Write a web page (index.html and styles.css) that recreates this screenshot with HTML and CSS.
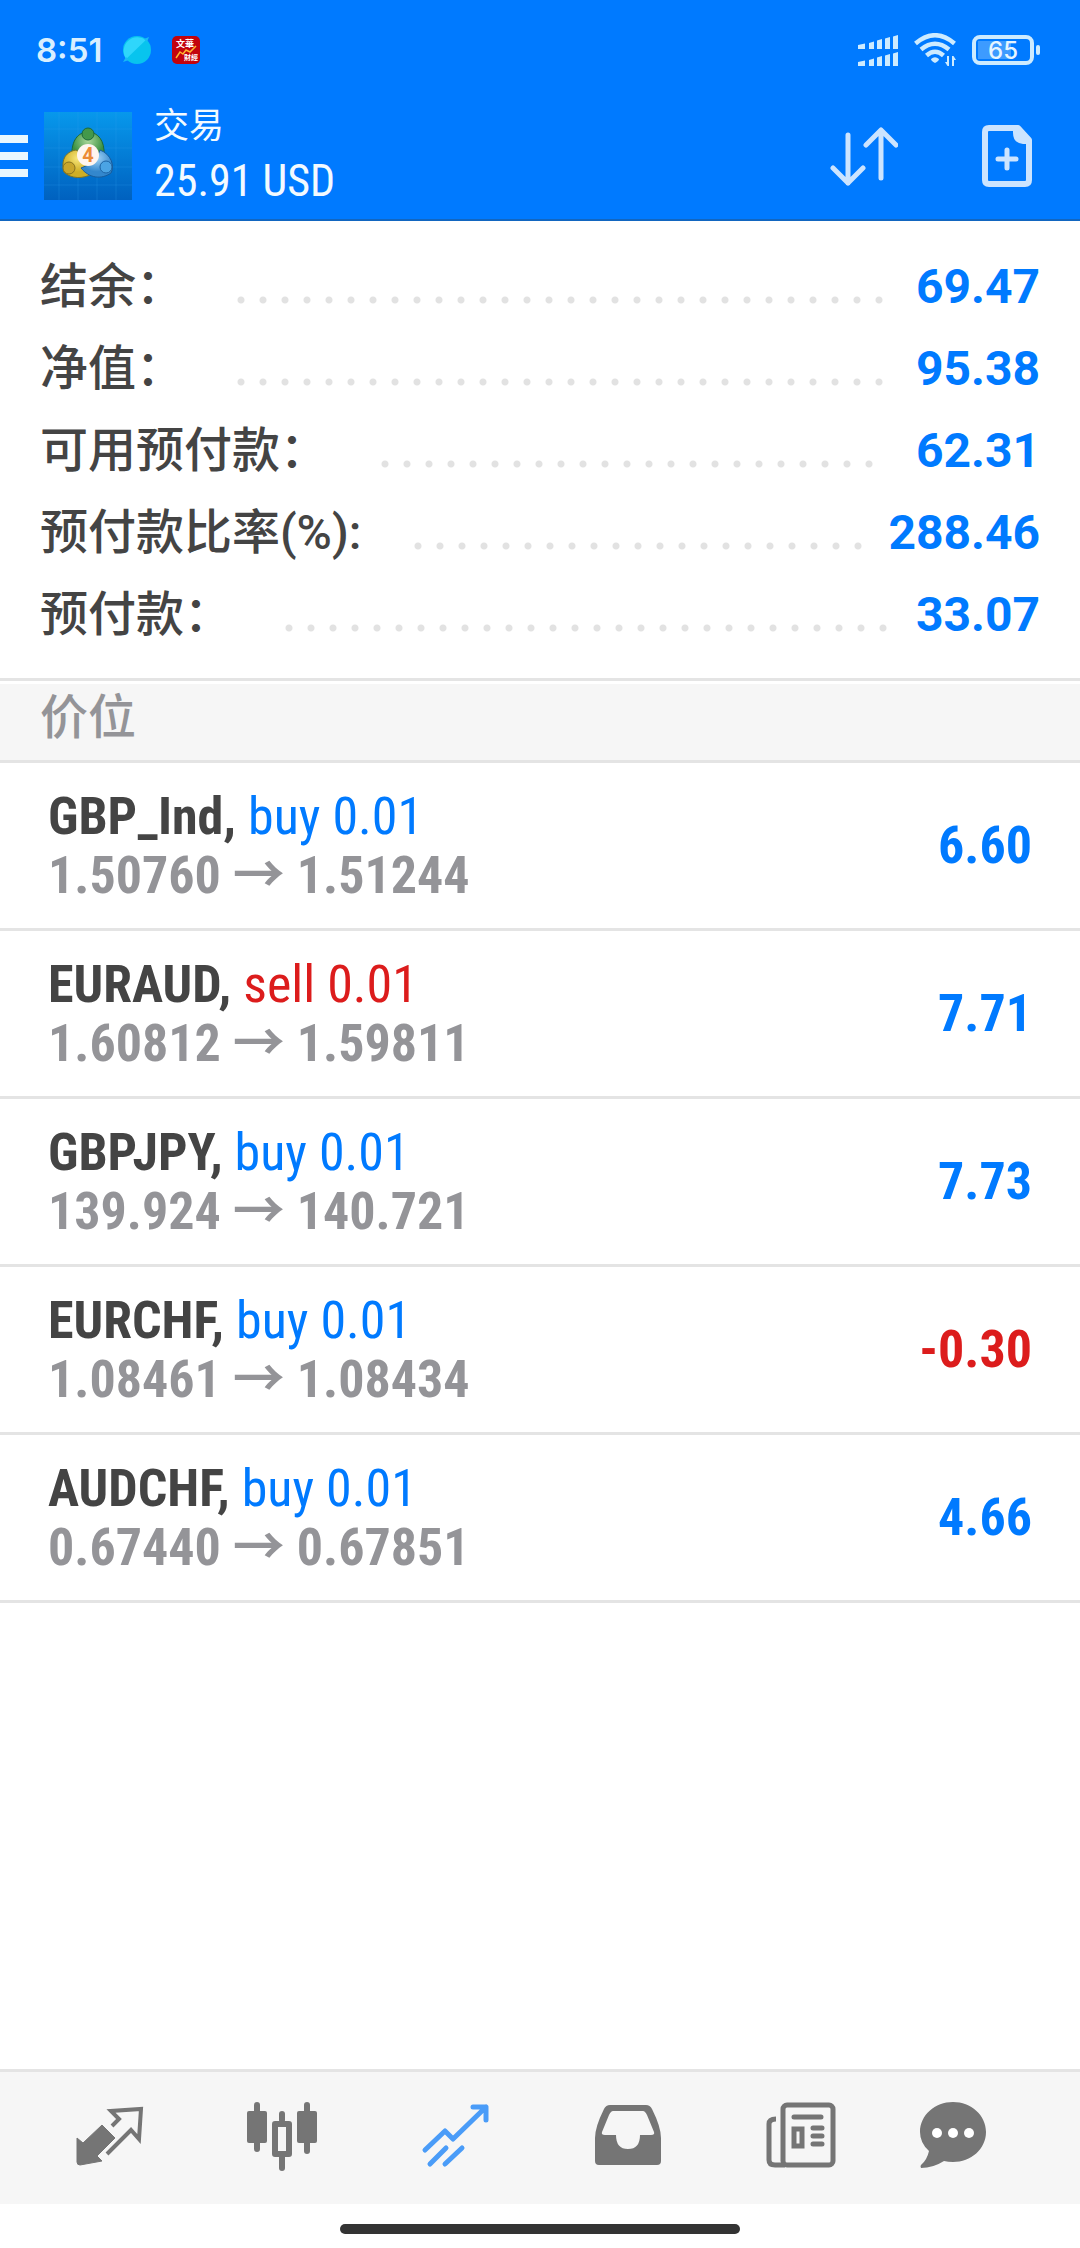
FILE: index.html
```html
<!DOCTYPE html>
<html lang="zh-CN">
<head>
<meta charset="utf-8">
<meta name="viewport" content="width=device-width, initial-scale=1">
<title>交易</title>
<link rel="stylesheet" href="styles.css">
</head>
<body>
<div class="screen">
  <header class="top">
    <div class="status">
      <span class="clock">8:51</span>
      <svg class="badge" viewBox="0 0 28 28" aria-hidden="true"><circle cx="14" cy="14" r="14" fill="#08c4ee"/><path d="M0 26L26 1L23 4A14 14 0 0 0 3 23Z" fill="#2fd6fb"/><path d="M0 26l6-2-3-3zM26 1l-5 2 3 3z" fill="#18b9f5"/></svg>
      <svg class="badge" viewBox="0 0 28 28" aria-hidden="true"><rect width="28" height="28" rx="5" fill="#c3030d"/><text class="badge-text" x="4" y="11">文華</text><text class="badge-text badge-small" x="12" y="24">財經</text><path d="M4 22l4-6 3 2 3-4 4 2 6-6" fill="none" stroke="#ffb52e" stroke-width="1.500"/></svg>
      <span class="spacer"></span>
      <svg class="signal" viewBox="0 0 40 31" aria-hidden="true"><path fill="#cdebff" d="M0 10l7-1.500v5.500H0zM11 8l5-1.500V14h-5zM19 5.500l5-1.500v10h-5zM27 3.500L32 2v12h-5zM35 1.500L40 0v14h-5zM0 27l7-1.500V31H0zM11 25l5-1.500V31h-5zM19 22.500l5-1.500v10h-5zM27 20.500l5-1.500v12h-5zM35 18.500l5-1.500v14h-5z"/></svg>
      <svg class="wifi" viewBox="0 0 42 34" aria-hidden="true"><g fill="none" stroke="#cdebff" stroke-width="4.500"><path d="M1.500 10.500Q21-6 40.500 10.500M7 16.500Q21 5 35 16.500M12.500 22.500Q21 15 29.500 22.500"/></g><path fill="#cdebff" d="M17 26q4-3.500 8 0 0 2-4 4-4-2-4-4zM35 23v10h-1.500L31 29h2v-6zM38 33V23h1.500l2.500 4h-2v6z"/></svg>
      <svg class="battery" viewBox="0 0 68 30" aria-hidden="true"><rect x="6" y="6" width="33" height="18" fill="#3d9bff"/><rect x="2" y="2" width="58" height="26" rx="6" fill="none" stroke="#cdebff" stroke-width="4"/><rect x="64" y="10" width="4" height="10" rx="2" fill="#cdebff"/><text class="battery-text" x="31" y="24" text-anchor="middle">65</text></svg>
    </div>
    <div class="appbar">
      <button class="menu" aria-label="菜单"><svg viewBox="0 0 28 42"><path d="M0 4h28M0 21h28M0 38h28" stroke="#e9f7ff" stroke-width="8"/></svg></button>
      <svg class="logo" viewBox="0 0 88 88" aria-hidden="true">
        <defs>
          <linearGradient id="sky" x2="0" y2="1"><stop stop-color="#0798ec"/><stop offset="1" stop-color="#0061bf"/></linearGradient>
          <radialGradient id="leaf" cy=".3"><stop stop-color="#a9d79a"/><stop offset="1" stop-color="#3a9142"/></radialGradient>
          <radialGradient id="gold" cy=".3"><stop stop-color="#f7e67a"/><stop offset="1" stop-color="#cfae25"/></radialGradient>
          <radialGradient id="blue" cy=".3"><stop stop-color="#a2d4f7"/><stop offset="1" stop-color="#3387cd"/></radialGradient>
        </defs>
        <rect width="88" height="88" fill="url(#sky)"/>
        <path d="M0 17h88M0 36h88M0 55h88M0 73h88M15 0v88M34 0v88M53 0v88M72 0v88" stroke="#2fa3ee" stroke-opacity=".25"/>
        <path d="M28 44C27 29 34 20 44 20S61 29 60 43L48 50Z" fill="url(#leaf)" stroke="#1d6938"/>
        <path d="M32 38C20 40 17 50 20 60c7 7 19 7 28 2L40 43Z" fill="url(#gold)" stroke="#7c7427"/>
        <path d="M56 38C67 42 71 54 67 61 57 68 45 66 37 56l14-6Z" fill="url(#blue)" stroke="#185c9b"/>
        <circle cx="44" cy="22" r="6" fill="#43984a" stroke="#1d6938"/><circle cx="25" cy="56" r="6" fill="#c9a62c" stroke="#867222"/><circle cx="62" cy="55" r="6" fill="#4ba4e4" stroke="#1d64a5"/>
        <circle cx="44" cy="43" r="11" fill="#fff5ef"/>
        <text class="logo-text" x="44" y="50" text-anchor="middle">4</text>
      </svg>
      <div class="titles">
        <h1 class="title">交易</h1>
        <div class="equity">25.91 USD</div>
      </div>
      <button class="action" aria-label="排序"><svg class="sort" viewBox="0 0 68 60"><path d="M18 9v48M3 42l15 15 15-15M51 52V4M36 19L51 4l15 15" fill="none" stroke="#cce4ff" stroke-width="5" stroke-linecap="round" stroke-linejoin="round"/></svg></button>
      <button class="action" aria-label="新订单"><svg class="order" viewBox="0 0 50 62"><path d="M7 3h29l11 12v40q0 4-4 4H7q-4 0-4-4V7q0-4 4-4z" fill="none" stroke="#cce4ff" stroke-width="6" stroke-linejoin="round"/><path d="M31 3h7l10 11v5h-7Q31 18 31 8z" fill="#cce4ff"/><path d="M16 34h18M25 25v18" stroke="#cce4ff" stroke-width="5" stroke-linecap="round"/></svg></button>
    </div>
  </header>

  <main class="content">
    <dl class="summary">
      <div class="line"><dt>结余：</dt><dd class="leader"></dd><dd class="amount">69.47</dd></div>
      <div class="line"><dt>净值：</dt><dd class="leader"></dd><dd class="amount">95.38</dd></div>
      <div class="line"><dt>可用预付款：</dt><dd class="leader"></dd><dd class="amount">62.31</dd></div>
      <div class="line"><dt>预付款比率(%):</dt><dd class="leader"></dd><dd class="amount">288.46</dd></div>
      <div class="line"><dt>预付款：</dt><dd class="leader"></dd><dd class="amount">33.07</dd></div>
    </dl>
    <h2 class="section">价位</h2>
    <ul class="positions">
      <li class="position"><div><div class="deal"><b>GBP_Ind,</b> <span class="buy">buy 0.01</span></div><div class="prices">1.50760 → 1.51244</div></div><div class="profit">6.60</div></li>
      <li class="position"><div><div class="deal"><b>EURAUD,</b> <span class="sell">sell 0.01</span></div><div class="prices">1.60812 → 1.59811</div></div><div class="profit">7.71</div></li>
      <li class="position"><div><div class="deal"><b>GBPJPY,</b> <span class="buy">buy 0.01</span></div><div class="prices">139.924 → 140.721</div></div><div class="profit">7.73</div></li>
      <li class="position"><div><div class="deal"><b>EURCHF,</b> <span class="buy">buy 0.01</span></div><div class="prices">1.08461 → 1.08434</div></div><div class="profit loss">-0.30</div></li>
      <li class="position"><div><div class="deal"><b>AUDCHF,</b> <span class="buy">buy 0.01</span></div><div class="prices">0.67440 → 0.67851</div></div><div class="profit">4.66</div></li>
    </ul>
  </main>

  <nav class="tabs">
    <button class="tab" aria-label="行情"><svg viewBox="0 0 72 72"><path d="M29 25L42 38 24 56l5 5-22 4q-3 0-3-3V38l6 5z" fill="#757575" stroke="#757575" stroke-linejoin="round"/><path d="M39 26l7-7-8-8 30-2-2 30-8-9-24 24" fill="none" stroke="#757575" stroke-width="4"/></svg></button>
    <button class="tab" aria-label="图表"><svg viewBox="0 0 72 72"><g fill="#757575"><rect x="1" y="11" width="20" height="32" rx="2"/><rect x="8" y="2" width="6" height="50" rx="3"/><rect x="51" y="11" width="20" height="32" rx="2"/><rect x="58" y="2" width="6" height="52" rx="3"/><rect x="33" y="11" width="6" height="12" rx="3"/><rect x="33" y="54" width="6" height="17" rx="3"/></g><rect x="29" y="24" width="14" height="30" fill="none" stroke="#757575" stroke-width="6" stroke-linejoin="round"/></svg></button>
    <button class="tab" aria-label="交易" aria-current="page"><svg viewBox="0 0 72 72"><path d="M6 50l20-19 8 8L67 7M54 7h13v13M11 64l16-16M26 64l17-16" fill="none" stroke="#4a9cf8" stroke-width="5" stroke-linecap="round" stroke-linejoin="round"/></svg></button>
    <button class="tab" aria-label="历史"><svg viewBox="0 0 72 72"><path fill="#757575" fill-rule="evenodd" d="M18 5h36q4 0 6 4 9 18 9 29v23q0 4-4 4H7q-4 0-4-4V38Q3 27 12 9q2-4 6-4zm3 6q-2 0-4 4l-7 17q-1 3 3 3h11q0 14 12 14t12-14h11q4 0 3-3l-7-17q-2-4-4-4z"/></svg></button>
    <button class="tab" aria-label="新闻"><svg viewBox="0 0 72 72"><g fill="none" stroke="#757575" stroke-width="5"><rect x="18" y="5" width="50" height="60" rx="4"/><path d="M11 19q-7 0-7 5v36q0 5 6 5h10"/><rect x="29" y="29" width="8" height="17"/><path d="M29 17h27M48 28h9M48 36h9M48 44h9" stroke-linecap="round"/></g></svg></button>
    <button class="tab" aria-label="消息"><svg viewBox="0 0 72 72"><path fill="#757575" d="M36 2C54 2 69 15 69 32S54 62 36 62q-5 0-9-1-11 7-23 7-1-2 0-3 6-5 8-14Q3 43 3 32C3 15 18 2 36 2z"/><g fill="#fff"><circle cx="20" cy="33" r="5"/><circle cx="36" cy="33" r="5"/><circle cx="52" cy="33" r="5"/></g></svg></button>
  </nav>
  <div class="home"><span class="pill"></span></div>
</div>
</body>
</html>
```
FILE: styles.css
```css
* { box-sizing: border-box; }
body, h1, h2, dl, dd, ul { margin: 0; padding: 0; }
body {
  font-family: Roboto, "Noto Sans CJK SC", sans-serif;
  background: #fff;
  color: #444;
}
button { border: 0; padding: 0; background: none; display: flex; align-items: center; justify-content: center; }
svg { display: block; flex: none; }

.screen { min-height: 100vh; display: flex; flex-direction: column; }

.top { background: #007aff; border-bottom: 2px solid #1266c0; color: #f3faff; padding-bottom: 8px; }
.status { height: 100px; padding: 0 40px 0 36px; display: flex; align-items: center; }
.clock { font-family: Inter, sans-serif; font-weight: 600; font-size: 33px; color: #d9efff; }
.badge { width: 28px; height: 28px; margin-left: 21px; }
.badge-text { font: bold 9px "Noto Sans CJK TC", sans-serif; fill: #fff; }
.badge-small { font-size: 7px; }
.spacer { flex: 1; }
.signal { width: 40px; height: 31px; }
.wifi { width: 42px; height: 34px; margin: 0 16px; }
.battery { width: 68px; height: 30px; }
.battery-text { font: 500 24px Inter, sans-serif; fill: #e6f5ff; }

.appbar { height: 111px; padding-right: 48px; display: flex; align-items: center; }
.menu svg { width: 28px; height: 42px; }
.logo { width: 88px; height: 88px; margin: 0 22px 0 16px; }
.logo-text { font: bold 20px Roboto, sans-serif; fill: #ec8b37; }
.titles { flex: 1; padding-top: 2px; }
.title { font-size: 35px; line-height: 48px; font-weight: 400; }
.equity, .deal, .prices, .profit { font-family: "Roboto Condensed", "Liberation Sans Narrow", Roboto, "Noto Sans CJK SC", sans-serif; }
.equity { font-size: 44px; line-height: 60px; }
.action { margin-left: 84px; }
.sort { width: 68px; height: 60px; }
.order { width: 50px; height: 62px; }

.content { flex: 1; }
.summary { padding: 25px 40px 22px; border-bottom: 3px solid #e4e4e4; }
.line { height: 82px; display: flex; align-items: center; font-size: 48px; line-height: 82px; }
.line dt, .section { font-weight: 500; }
.leader { flex: 1; margin: 0 10px 0 53px; height: 82px; display: flex; align-items: center; padding-top: 26px; }
.leader::before {
  content: "";
  width: round(down, 100%, 22px);
  height: 8px;
  background: radial-gradient(circle at 4px 4px, #e2e2e2 3px, transparent 4px) 0 0 / 22px 8px;
}
.amount { font-weight: 700; color: #007aff; }
.section { margin-top: 3px; padding: 0 40px; height: 79px; line-height: 68px; font-size: 48px; color: #949498; background: #f6f6f6; border-bottom: 3px solid #e4e4e4; }
.positions { list-style: none; }
.position { height: 168px; padding: 0 48px; border-bottom: 3px solid #e4e4e4; display: flex; align-items: center; justify-content: space-between; font-size: 52px; line-height: 59px; }
.prices { font-weight: 700; color: #949498; }
.buy { color: #007aff; }
.sell { color: #dc1c1c; }
.profit { font-weight: 700; color: #007aff; }
.loss { color: #dc1c1c; }

.tabs { height: 135px; padding: 0 61px 4px 22px; background: #f6f6f6; border-top: 3px solid #e4e4e4; display: grid; grid-template-columns: repeat(5, 173fr) 132fr; }
.tab svg { width: 72px; height: 72px; }
.home { height: 44px; padding-top: 5px; display: flex; align-items: center; justify-content: center; }
.pill { width: 37%; height: 10px; border-radius: 5px; background: #333; }
```
